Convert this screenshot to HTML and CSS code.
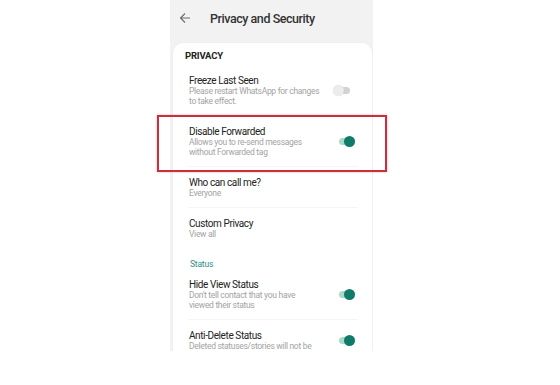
FILE: index.html
```html
<!DOCTYPE html>
<html>
<head>
<meta charset="utf-8">
<link rel="stylesheet" href="styles.css">
</head>
<body>
<div class="phone">
  <div class="topbar">
    <svg class="back" width="12" height="12" viewBox="0 0 12 12"><path d="M11 6H1.5M6 1.5L1.5 6L6 10.5" fill="none" stroke="#6b6b6b" stroke-width="1.1"/></svg>
    <span class="title">Privacy and Security</span>
  </div>
  <div class="card">
    <div class="section">PRIVACY</div>
    <div class="item">
      <div class="text">
        <div class="t">Freeze Last Seen</div>
        <div class="d">Please restart WhatsApp for changes<br>to take effect.</div>
      </div>
      <span class="toggle off"></span>
    </div>
    <div class="item">
      <div class="text">
        <div class="t">Disable Forwarded</div>
        <div class="d">Allows you to re-send messages<br>without Forwarded tag</div>
      </div>
      <span class="toggle on"></span>
    </div>
    <div class="item">
      <div class="text">
        <div class="t">Who can call me?</div>
        <div class="d">Everyone</div>
      </div>
    </div>
    <div class="item last">
      <div class="text">
        <div class="t">Custom Privacy</div>
        <div class="d">View all</div>
      </div>
    </div>
    <div class="sub">Status</div>
    <div class="item">
      <div class="text">
        <div class="t">Hide View Status</div>
        <div class="d">Don't tell contact that you have<br>viewed their status</div>
      </div>
      <span class="toggle on"></span>
    </div>
    <div class="item cut">
      <div class="text">
        <div class="t">Anti-Delete Status</div>
        <div class="d">Deleted statuses/stories will not be</div>
      </div>
      <span class="toggle on"></span>
    </div>
  </div>
</div>
<div class="highlight"></div>
</body>
</html>
```
FILE: styles.css
```css
html, body {
  margin: 0;
  padding: 0;
  background: #ffffff;
}
body {
  font-family: Roboto, "Liberation Sans", sans-serif;
  position: relative;
  width: 560px;
  height: 385px;
  overflow: hidden;
}
.phone {
  margin-left: 170px;
  width: 203px;
  height: 351px;
  background: #f2f2f2;
  overflow: hidden;
}
.topbar {
  height: 42px;
  display: flex;
  align-items: center;
  padding-left: 9px;
  box-sizing: border-box;
  padding-bottom: 6px;
}
.back {
  display: block;
}
.title {
  margin-left: 19px;
  font-size: 12.5px;
  font-weight: 500;
  color: #333;
  letter-spacing: -0.45px;
}
.card {
  background: #fff;
  margin-left: 2px;
  border-radius: 11px 11px 0 0;
  border: 1px solid #efefef;
  border-bottom: none;
  height: 320px;
  overflow: hidden;
}
.section {
  font-size: 9.5px;
  font-weight: 700;
  color: #222;
  padding: 8px 0 0 12px;
  line-height: 10px;
  height: 14px;
  letter-spacing: -0.2px;
}
.item {
  display: flex;
  align-items: center;
  margin-left: 15px;
  margin-right: 14px;
  padding: 9.5px 0 9.5px 1px;
  border-bottom: 1px solid #f5f5f5;
}
.item.last {
  border-bottom: none;
}
.item.cut {
  padding-top: 10px;
}
.text {
  flex: 1;
}
.t {
  font-size: 10px;
  line-height: 11px;
  color: #222;
  letter-spacing: -0.4px;
}
.d {
  font-size: 8.5px;
  line-height: 10px;
  color: #a3a3a3;
  letter-spacing: -0.3px;
}
.sub {
  font-size: 8.5px;
  color: #2f8d87;
  padding: 11px 0 0 17px;
  line-height: 10px;
  letter-spacing: -0.2px;
}
.toggle {
  position: relative;
  width: 17px;
  height: 11px;
  margin-right: 3px;
}
.toggle::before {
  content: "";
  position: absolute;
  left: 1px;
  right: 0;
  top: 2px;
  height: 7px;
  border-radius: 4px;
  background: #a9d8cd;
}
.toggle::after {
  content: "";
  position: absolute;
  right: 0;
  top: 0;
  width: 11px;
  height: 11px;
  border-radius: 50%;
  background: #117b69;
}
.toggle.off {
  margin-right: 8px;
}
.toggle.off::before {
  background: #d3d3d3;
}
.toggle.off::after {
  left: 0;
  right: auto;
  background: #ececec;
  box-shadow: 0 0 1px rgba(0,0,0,0.15);
}
.highlight {
  position: absolute;
  left: 157px;
  top: 115px;
  width: 226px;
  height: 53px;
  border: 2.5px solid #c9303a;
  box-shadow: 0 0 2px rgba(160,30,40,0.35);
}
```
